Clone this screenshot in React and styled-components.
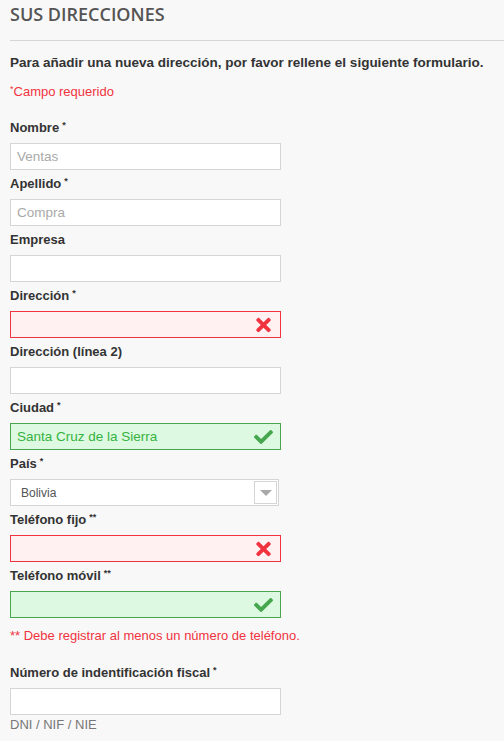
import React from 'react';
import styled, { createGlobalStyle } from 'styled-components';
import { FaTimes, FaCheck } from 'react-icons/fa';

const GlobalStyle = createGlobalStyle`
  html, body {
    margin: 0;
    padding: 0;
    background: #f8f8f8;
  }
  body {
    font-family: Arial, "Liberation Sans", sans-serif;
    color: #333;
  }
`;

const Page = styled.div`
  padding: 0 0 0 10px;
  width: 494px;
`;

const Title = styled.h1`
  margin: 0;
  padding: 3px 0 15px;
  font-family: "Open Sans", sans-serif;
  font-size: 18px;
  font-weight: 600;
  line-height: 22px;
  color: #555454;
  text-transform: uppercase;
  border-bottom: 1px solid #d6d4d4;
`;

const Intro = styled.p`
  margin: 13px 0 0;
  font-size: 13.5px;
  font-weight: bold;
  line-height: 18px;
  color: #333;
`;

const Required = styled.p`
  margin: 11px 0 0;
  font-size: 13px;
  line-height: 18px;
  color: #f13340;
`;

const Star = styled.sup`
  font-size: 9px;
  vertical-align: top;
  position: relative;
  top: -3px;
  margin-left: ${p => (p.$tight ? '0' : '3px')};
`;

const Form = styled.div`
  margin-top: 17px;
  display: flex;
  flex-direction: column;
`;

const Group = styled.div`
  display: flex;
  flex-direction: column;
  margin-bottom: 4px;
  margin-top: ${p => p.$gap || 0}px;
`;

const Label = styled.label`
  font-size: 13px;
  font-weight: bold;
  line-height: 18px;
  color: #333;
  margin-top: 1px;
  margin-bottom: 6px;
`;

const colors = {
  default: { bg: '#fff', border: '#d6d4d4', text: '#9c9b9b' },
  error: { bg: '#fff1f2', border: '#f13340', text: '#f13340' },
  ok: { bg: '#ddf9e1', border: '#46a74e', text: '#35b33f' },
};

const Field = styled.div`
  position: relative;
  box-sizing: border-box;
  width: 271px;
  height: 27px;
  background: ${p => colors[p.$state].bg};
  border: 1px solid ${p => colors[p.$state].border};
  display: flex;
  align-items: center;
  padding: 0 6px;
  font-size: 13.5px;
  color: ${p => colors[p.$state].text};
`;

const Placeholder = styled.span`
  color: #a9a9a9;
`;

const StateIcon = styled.span`
  position: absolute;
  right: ${p => (p.$state === 'error' ? '6px' : '7px')};
  top: 50%;
  transform: translateY(-50%);
  display: flex;
  font-size: ${p => (p.$state === 'error' ? '21px' : '19px')};
  color: ${p => (p.$state === 'error' ? '#f13340' : '#46a74e')};
`;

const Select = styled.div`
  box-sizing: border-box;
  width: 269px;
  height: 27px;
  background: #fff;
  border: 1px solid #d6d4d4;
  display: flex;
  align-items: center;
  justify-content: space-between;
  padding: 0 1px 0 10px;
  font-size: 12px;
  color: #555;
`;

const Arrow = styled.span`
  box-sizing: border-box;
  width: 23px;
  height: 23px;
  border: 1px solid #d6d4d4;
  display: flex;
  align-items: center;
  justify-content: center;
  &::after {
    content: '';
    border-left: 6px solid transparent;
    border-right: 6px solid transparent;
    border-top: 6px solid #a9a9a9;
  }
`;

const Note = styled.p`
  margin: 5px 0 0;
  font-size: 13px;
  line-height: 18px;
  color: #f13340;
`;

const Hint = styled.span`
  margin-top: 1px;
  font-size: 13px;
  line-height: 18px;
  color: #777;
`;

function Input({ state = 'default', value, placeholder }) {
  return (
    <Field $state={state}>
      {value ? value : placeholder && <Placeholder>{placeholder}</Placeholder>}
      {state !== 'default' && (
        <StateIcon $state={state}>{state === 'error' ? <FaTimes /> : <FaCheck />}</StateIcon>
      )}
    </Field>
  );
}

function FieldGroup({ label, stars, children }) {
  return (
    <Group>
      <Label>
        {label}
        {stars && <Star>{stars}</Star>}
      </Label>
      {children}
    </Group>
  );
}

export default function App() {
  return (
    <Page>
      <GlobalStyle />
      <Title>Sus direcciones</Title>
      <Intro>Para añadir una nueva dirección, por favor rellene el siguiente formulario.</Intro>
      <Required>
        <Star $tight>*</Star>Campo requerido
      </Required>
      <Form>
        <FieldGroup label="Nombre" stars="*">
          <Input placeholder="Ventas" />
        </FieldGroup>
        <FieldGroup label="Apellido" stars="*">
          <Input placeholder="Compra" />
        </FieldGroup>
        <FieldGroup label="Empresa">
          <Input />
        </FieldGroup>
        <FieldGroup label="Dirección" stars="*">
          <Input state="error" />
        </FieldGroup>
        <FieldGroup label="Dirección (línea 2)">
          <Input />
        </FieldGroup>
        <FieldGroup label="Ciudad" stars="*">
          <Input state="ok" value="Santa Cruz de la Sierra" />
        </FieldGroup>
        <FieldGroup label="País" stars="*">
          <Select>
            Bolivia
            <Arrow />
          </Select>
        </FieldGroup>
        <FieldGroup label="Teléfono fijo" stars="**">
          <Input state="error" />
        </FieldGroup>
        <FieldGroup label="Teléfono móvil" stars="**">
          <Input state="ok" />
        </FieldGroup>
        <Note>** Debe registrar al menos un número de teléfono.</Note>
        <Group $gap={18}>
          <Label>
            Número de indentificación fiscal<Star>*</Star>
          </Label>
          <Input />
          <Hint>DNI / NIF / NIE</Hint>
        </Group>
      </Form>
    </Page>
  );
}
